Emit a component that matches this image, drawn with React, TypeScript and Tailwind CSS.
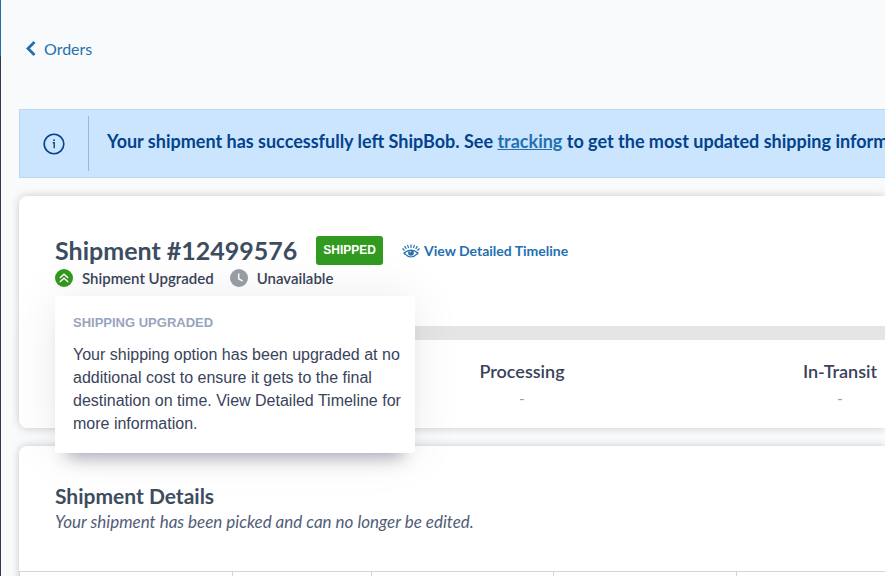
import { ReactNode } from "react";

const steps = ["Processing", "In-Transit"];

function InfoIcon() {
  return (
    <svg width="22" height="22" viewBox="0 0 22 22" fill="none" aria-hidden="true">
      <circle cx="11" cy="11" r="9.8" stroke="#03438c" strokeWidth="1.6" />
      <circle cx="11" cy="7.2" r="0.9" fill="#03438c" />
      <path d="M9.8 9.8h1.4v5.4" stroke="#03438c" strokeWidth="1.4" />
    </svg>
  );
}

function EyeIcon() {
  return (
    <svg width="18" height="14" viewBox="0 0 18 14" fill="none" aria-hidden="true">
      <g stroke="#2370b0" strokeWidth="1.2" strokeLinecap="round">
        <path d="M2 9Q9 3.2 16 9M2 9Q9 17 16 9" />
        <path d="M9 0.8v2.6M5.7 1.3l0.7 2.4M12.3 1.3l-0.7 2.4M2.8 2.4l1.2 2M15.2 2.4l-1.2 2M0.8 4.8l1.5 1.4M17.2 4.8l-1.5 1.4" />
      </g>
      <circle cx="9" cy="8.8" r="2.9" fill="#2370b0" />
      <circle cx="8.2" cy="7.8" r="0.8" fill="#fff" />
    </svg>
  );
}

function UpgradedIcon() {
  return (
    <svg width="18" height="18" viewBox="0 0 18 18" fill="none" aria-hidden="true">
      <circle cx="9" cy="9" r="9" fill="#329a20" />
      <path d="M4.8 9l4.2-3.8L13.2 9M4.8 13L9 9.2l4.2 3.8" stroke="#fff" strokeWidth="1.4" />
    </svg>
  );
}

function ClockIcon() {
  return (
    <svg width="18" height="18" viewBox="0 0 18 18" fill="none" aria-hidden="true">
      <circle cx="9" cy="9" r="9" fill="#9b9ea6" />
      <path d="M8.7 4.5v5.3l4 2.2" stroke="#fff" strokeWidth="1.5" />
    </svg>
  );
}

function Card({ children, className }: { children: ReactNode; className: string }) {
  return (
    <section className={`rounded-l-lg bg-white shadow-[0_0_8px_rgba(0,0,0,0.2)] ${className}`}>
      {children}
    </section>
  );
}

export default function App() {
  return (
    <div className="flex h-screen overflow-hidden bg-[#f9fafc] font-['Lato','Open_Sans',sans-serif] text-[#39435a]">
      <div className="flex w-px shrink-0 flex-col bg-[#343a54]">
        <div className="h-14 bg-[#1871b9]" />
      </div>

      <main className="flex min-w-0 flex-1 flex-col pl-[18px]">
        <nav className="px-[7px] pt-9 pb-12">
          <a href="#orders" className="flex items-center gap-2 text-base leading-[25px] text-[#2370b0]">
            <svg width="10" height="15" viewBox="0 0 10 15" fill="none" aria-hidden="true">
              <path d="M8.5 1L2 7.5 8.5 14" stroke="#2370b0" strokeWidth="2.8" />
            </svg>
            Orders
          </a>
        </nav>

        <div className="flex h-[69px] shrink-0 items-center border border-r-0 border-[#b8daf0] bg-[#cbe5ff] text-[#03438c]">
          <div className="flex h-[55px] w-[69px] shrink-0 items-center justify-center border-r border-[#94b8e2]">
            <InfoIcon />
          </div>
          <p className="pb-[6px] pl-[18px] text-lg leading-6 font-bold whitespace-nowrap">
            Your shipment has successfully left ShipBob. See{" "}
            <a href="#tracking" className="text-[#2370b0] underline">tracking</a>{" "}
            to get the most updated shipping information.
          </p>
        </div>

        <Card className="mt-[18px] h-[232px] shrink-0 pt-10 pl-9">
          <div className="flex items-center gap-[19px]">
            <h1 className="text-[25px] leading-[29px] font-bold text-[#3c4d60]">Shipment #12499576</h1>
            <span className="rounded-[3px] bg-[#329a20] px-[7px] font-['Liberation_Sans',Arial,sans-serif] text-xs leading-[29px] font-bold text-white">
              SHIPPED
            </span>
            <button type="button" className="flex items-center gap-1 text-sm leading-5 font-bold text-[#2370b0]">
              <EyeIcon />
              View Detailed Timeline
            </button>
          </div>

          <div className="relative flex gap-4 pt-1 text-[15px] leading-[18px] font-semibold">
            <div className="flex items-center gap-[9px]">
              <UpgradedIcon />
              Shipment Upgraded
            </div>
            <div className="flex items-center gap-[9px]">
              <ClockIcon />
              Unavailable
            </div>

            <div
              role="tooltip"
              className="absolute top-full left-0 z-10 mt-[9px] w-[360px] rounded-[3px] bg-white py-[18px] pr-3 pl-[18px] font-['Liberation_Sans',Arial,sans-serif] font-normal shadow-[0_0_50px_rgba(0,0,0,0.08),0_16px_16px_-12px_rgba(52,48,84,0.4)]"
            >
              <h2 className="text-[13px] leading-[18px] font-bold text-[#98a5be]">SHIPPING UPGRADED</h2>
              <p className="pt-[11px] text-base leading-[23px]">
                Your shipping option has been upgraded at no additional cost to ensure it gets to the final
                destination on time. View Detailed Timeline for more information.
              </p>
            </div>
          </div>

          <div className="mt-[39px] h-[14px] bg-[#e5e5e5]" />

          <ol className="flex overflow-hidden pt-[19px] pl-[308px] text-center">
            {steps.map((step) => (
              <li key={step} className="w-[318px] shrink-0">
                <div className="text-lg leading-6 font-semibold">{step}</div>
                <div className="pt-[3px] text-base leading-6 text-[#a0a0a0]">-</div>
              </li>
            ))}
          </ol>
        </Card>

        <Card className="mt-[18px] flex-1 pt-9">
          <div className="px-9">
            <h2 className="text-[21px] leading-7 font-bold text-[#3c4d60]">Shipment Details</h2>
            <p className="text-[17px] leading-6 text-[#515d77] italic">
              Your shipment has been picked and can no longer be edited.
            </p>
          </div>
          <div className="mt-[37px] flex h-16 border-t border-l border-[#d2d4de]">
            <div className="w-[213px] shrink-0 border-r border-[#d2d4de]" />
            <div className="w-[139px] shrink-0 border-r border-[#d2d4de]" />
            <div className="w-[182px] shrink-0 border-r border-[#d2d4de]" />
            <div className="w-[183px] shrink-0 border-r border-[#d2d4de]" />
            <div className="flex-1" />
          </div>
        </Card>
      </main>
    </div>
  );
}
